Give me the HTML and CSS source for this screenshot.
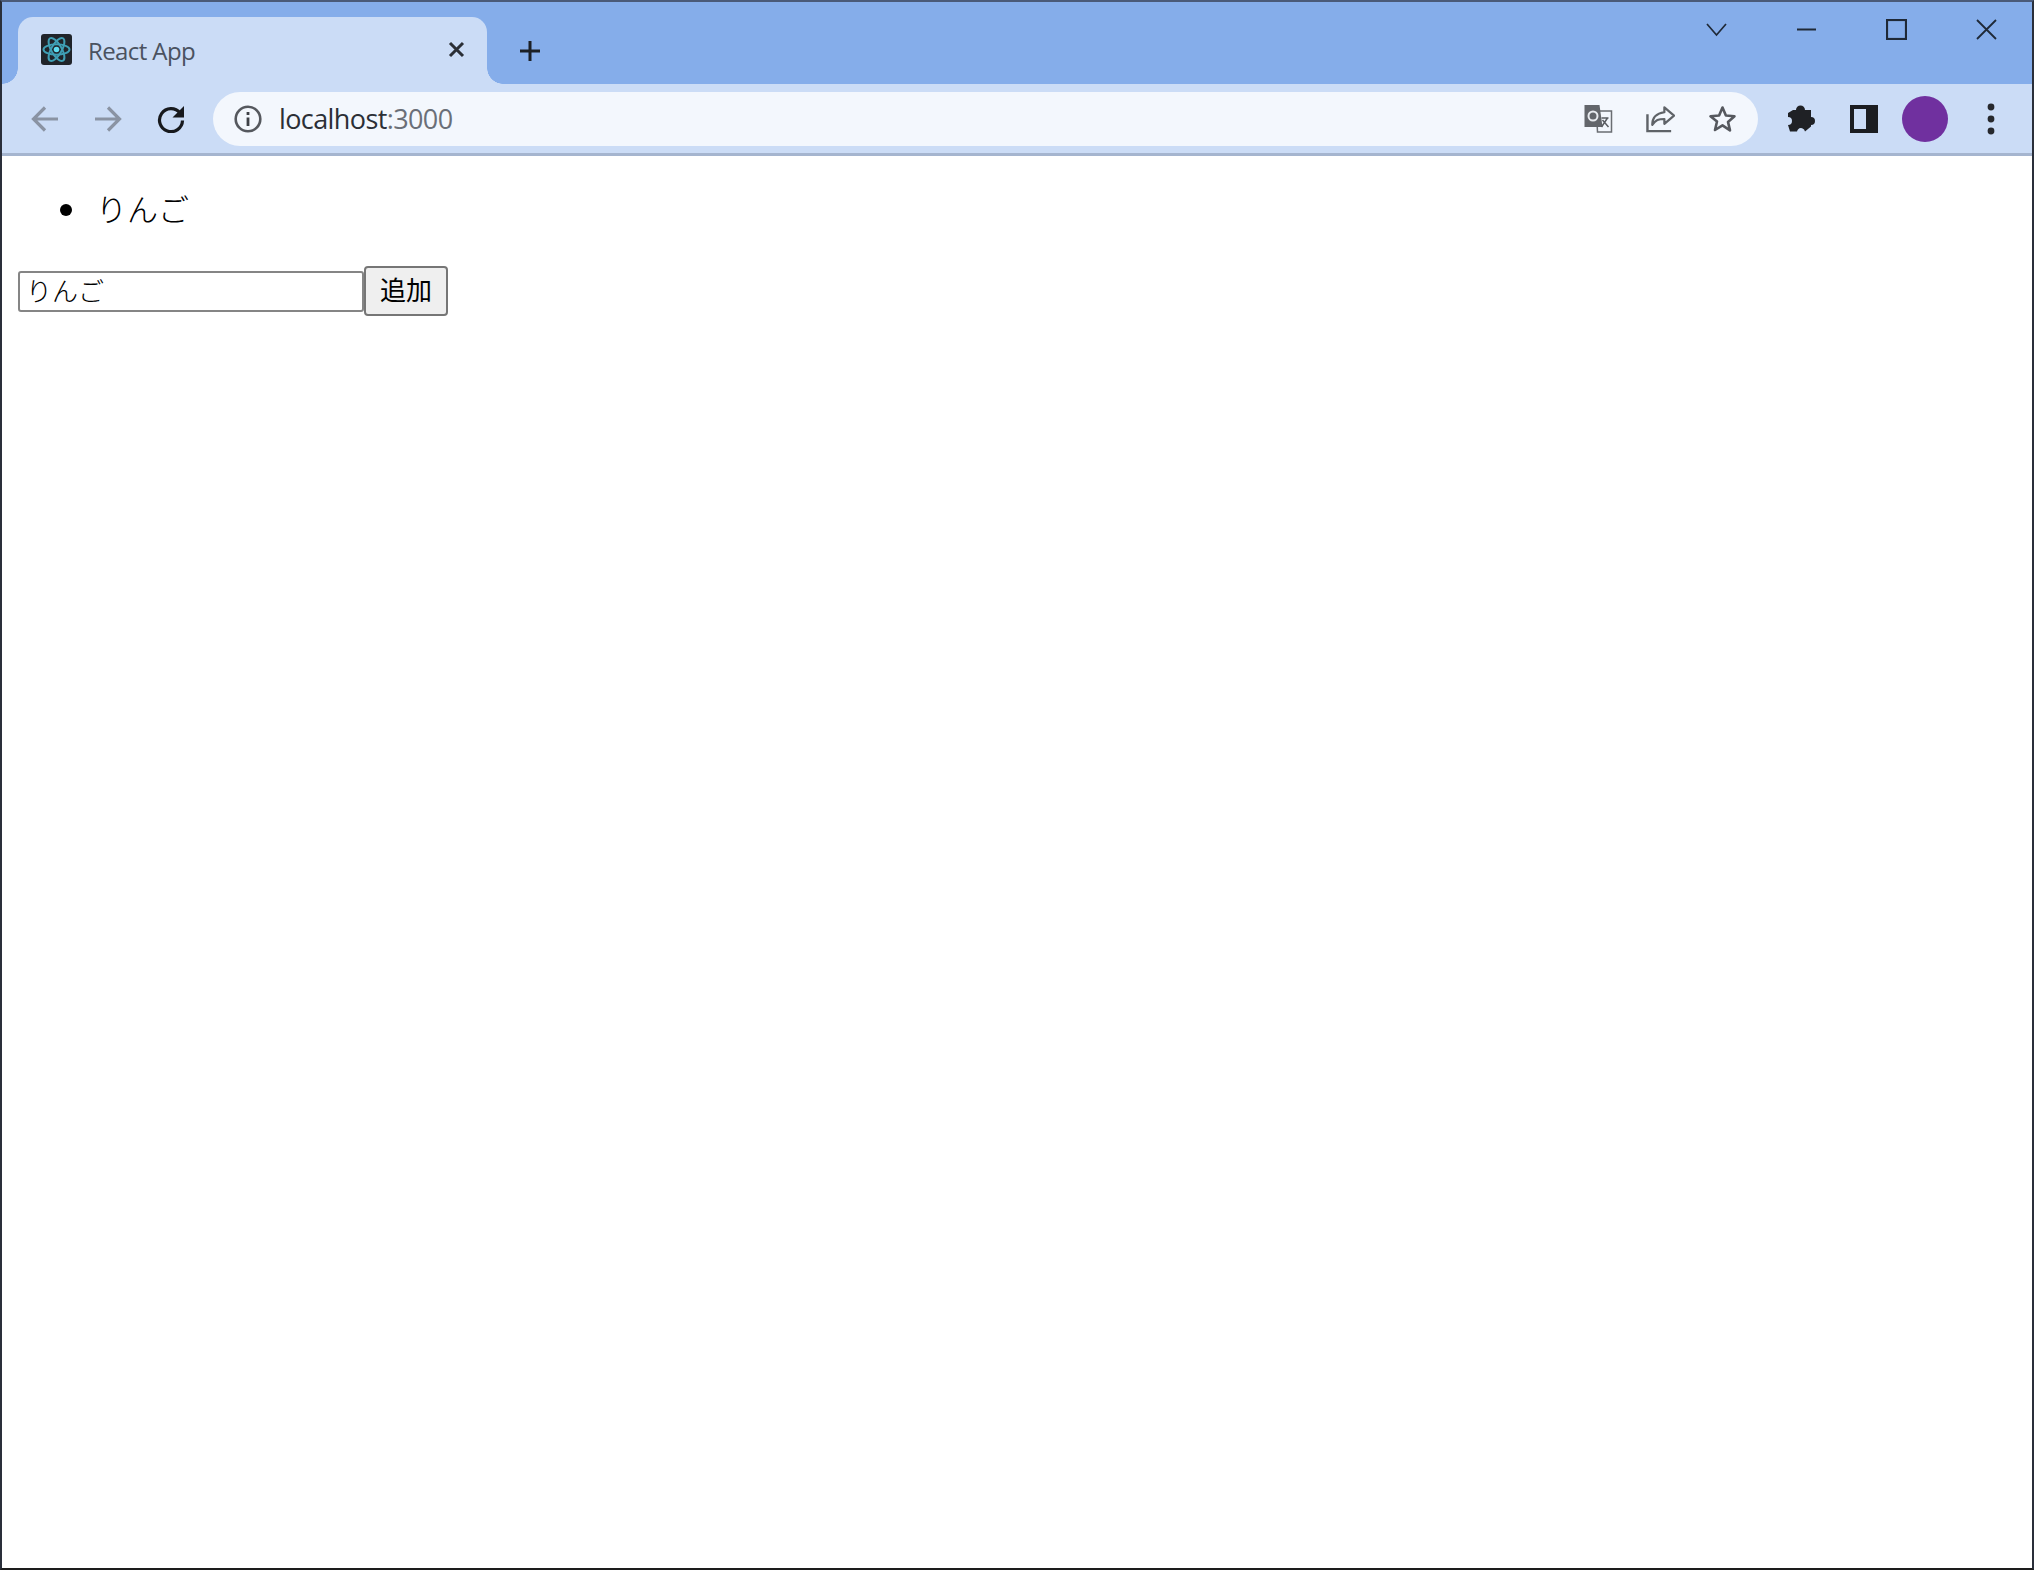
FILE: index.html
```
<!DOCTYPE html>
<html lang="ja">
<head>
<meta charset="utf-8">
<title>React App</title>
<link rel="stylesheet" href="styles.css">
</head>
<body>
<div class="window">
  <header class="tabstrip">
    <div class="tab">
      <svg class="favicon" viewBox="0 0 31 31">
        <rect width="31" height="31" rx="3" fill="#20242a"/>
        <g fill="none" stroke="#3f9fb5" stroke-width="2">
          <ellipse cx="15.500" cy="15.500" rx="13" ry="5.200"/>
          <ellipse cx="15.500" cy="15.500" rx="13" ry="5.200" transform="rotate(60 15.500 15.500)"/>
          <ellipse cx="15.500" cy="15.500" rx="13" ry="5.200" transform="rotate(120 15.500 15.500)"/>
        </g>
        <circle cx="15.500" cy="15.500" r="2.800" fill="#5fdcf0"/>
      </svg>
      <span class="tab-title">React App</span>
      <svg class="tab-close" viewBox="0 0 17 17"><path d="M2 2l13 13M15 2L2 15" stroke="#2b2f36" stroke-width="3" fill="none"/></svg>
    </div>
    <svg class="new-tab" viewBox="0 0 24 24"><path d="M12 2v20M2 12h20" stroke="#1c2026" stroke-width="3" fill="none"/></svg>
    <div class="window-controls">
      <svg class="win-icon" viewBox="0 0 21 21"><path d="M1 5l9.500 11L20 5" stroke="#1f2937" stroke-width="1.700" fill="none"/></svg>
      <svg class="win-icon" viewBox="0 0 21 21"><path d="M1 10.500h19" stroke="#1f2937" stroke-width="2" fill="none"/></svg>
      <svg class="win-icon" viewBox="0 0 21 21"><rect x="1" y="1" width="19" height="19" stroke="#1f2937" stroke-width="2.200" fill="none"/></svg>
      <svg class="win-icon" viewBox="0 0 21 21"><path d="M1 1l19 19M20 1L1 20" stroke="#1f2937" stroke-width="1.800" fill="none"/></svg>
    </div>
  </header>

  <nav class="toolbar">
    <svg class="tool-icon" viewBox="0 0 28 28"><path d="M27 14H3M14 2.500L2.500 14 14 25.500" stroke="#8a93a3" stroke-width="3.200" fill="none"/></svg>
    <svg class="tool-icon" viewBox="0 0 28 28"><path d="M1 14h24M14 2.500L25.500 14 14 25.500" stroke="#8a93a3" stroke-width="3.200" fill="none"/></svg>
    <svg class="tool-icon" viewBox="0 0 28 28"><path d="M23 8A11.500 11.500 0 1 0 25.500 15.500" stroke="#17191d" stroke-width="3.200" fill="none"/><path d="M27 1v11.500H15.500z" fill="#17191d"/></svg>
    <div class="omnibox">
      <svg class="site-info" viewBox="0 0 28 28"><circle cx="14" cy="14" r="12.300" stroke="#55585e" stroke-width="2.600" fill="none"/><path d="M12.600 12.500h2.800v8.500h-2.800zM12.600 7h2.800v2.900h-2.800z" fill="#3d4046"/></svg>
      <span class="url">localhost<span class="url-port">:3000</span></span>
      <div class="omni-actions">
        <svg class="omni-icon" viewBox="0 0 28 28">
          <path d="M12 6h15v21H13z" fill="#f3f7fd" stroke="#6a6d72" stroke-width="1.500"/>
          <path d="M0 0h15l3 22H0z" fill="#63666b"/>
          <circle cx="8.500" cy="11" r="4.500" fill="none" stroke="#e8ebef" stroke-width="2"/>
          <path d="M17 13h7M23 13l-6 9M18 15l6 7" stroke="#5a5d62" stroke-width="1.500" fill="none"/>
        </svg>
        <svg class="omni-icon" viewBox="0 0 30 28"><path d="M1.500 9v17.500H26" stroke="#5f6368" stroke-width="2.500" fill="none"/><path d="M19 2l10 8.500-10 8.500v-5c-6 0-9 1-12.500 6 0-7 4-12 12.500-13z" stroke="#5f6368" stroke-width="2.300" fill="none" stroke-linejoin="round"/></svg>
        <svg class="omni-icon" viewBox="0 0 28 28"><path d="M14 2.500l3.400 8 8.600.7-6.500 5.700 2 8.500L14 20.400 6.500 25l2-8.500L2 11.200l8.600-.7z" stroke="#55585e" stroke-width="2.600" fill="none" stroke-linejoin="round"/></svg>
      </div>
    </div>
    <svg class="puzzle" viewBox="0 0 29 28"><path d="M10 5a4.500 4.500 0 0 1 9 0h6v7a4 4 0 0 1 0 8v1.500l-6 5a4 4 0 0 0-7-2 4 4 0 0 0-1 2H4l-2-6.500a4 4 0 0 0 0-8V8l5-3z" fill="#1f2125"/></svg>
    <svg class="sidebar" viewBox="0 0 28 28"><path d="M0 0h28v28H0zM4 4v20h12V4z" fill="#1b1d21" fill-rule="evenodd"/></svg>
    <div class="avatar"></div>
    <svg class="kebab" viewBox="0 0 8 32"><circle cx="4" cy="4" r="3.400" fill="#26282d"/><circle cx="4" cy="16" r="3.400" fill="#26282d"/><circle cx="4" cy="28" r="3.400" fill="#26282d"/></svg>
  </nav>

  <main class="content">
    <ul class="items">
      <li class="item">りんご</li>
    </ul>
    <form class="add-form">
      <input class="add-input" type="text" value="りんご">
      <button class="add-button" type="button">追加</button>
    </form>
  </main>
</div>
</body>
</html>
```

FILE: styles.css
```
* {
  box-sizing: border-box;
}

html,
body {
  margin: 0;
  height: 100%;
  overflow: hidden;
}

svg {
  display: block;
  flex: none;
}

.window {
  display: flex;
  flex-direction: column;
  height: 1570px;
  background: #ffffff;
  border: 2px solid #2a2f3a;
  border-top-color: #4a5a78;
  border-bottom-color: #1d1d1d;
}

.tabstrip {
  display: flex;
  align-items: flex-start;
  height: 82px;
  padding: 15px 0 0 16px;
  background: #85adea;
}

.tab {
  position: relative;
  display: flex;
  align-items: center;
  width: 469px;
  height: 67px;
  padding: 0 22px 0 23px;
  background: #cbdcf6;
  border-radius: 15px 15px 0 0;
}

.tab::before,
.tab::after {
  content: "";
  position: absolute;
  bottom: 0;
  width: 16px;
  height: 16px;
}

.tab::before {
  left: -16px;
  background: radial-gradient(circle at 0 0, transparent 15.500px, #cbdcf6 16px);
}

.tab::after {
  right: -16px;
  background: radial-gradient(circle at 100% 0, transparent 15.500px, #cbdcf6 16px);
}

.favicon {
  width: 31px;
  height: 31px;
  margin-bottom: 3px;
}

.tab-title {
  flex: 1;
  margin-left: 16px;
  font: 24px/1 "Open Sans", sans-serif;
  letter-spacing: -0.6px;
  color: #4a5260;
}

.tab-close {
  width: 17px;
  height: 17px;
  margin-bottom: 3px;
}

.new-tab {
  width: 24px;
  height: 24px;
  margin: 22px 0 0 31px;
}

.window-controls {
  display: flex;
  gap: 69px;
  margin: 2px 0 0 auto;
  padding-right: 35px;
}

.win-icon {
  width: 21px;
  height: 21px;
}

.toolbar {
  display: flex;
  align-items: center;
  height: 69px;
  padding: 0 0 0 29px;
  background: #cbdcf6;
}

.tool-icon {
  width: 28px;
  height: 28px;
  margin-right: 35px;
}

.omnibox {
  display: flex;
  align-items: center;
  width: 1545px;
  height: 54px;
  margin-left: -7px;
  padding: 0 21px 0 21px;
  background: #f3f7fd;
  border-radius: 27px;
}

.site-info {
  width: 28px;
  height: 28px;
}

.url {
  margin-left: 17px;
  font: 27px/1 "Open Sans", sans-serif;
  letter-spacing: -0.6px;
  color: #2b2f36;
}

.url-port {
  color: #6a6f78;
}

.omni-actions {
  display: flex;
  align-items: center;
  gap: 33px;
  margin-left: auto;
}

.omni-icon {
  width: 29px;
  height: 28px;
}

.puzzle {
  width: 29px;
  height: 28px;
  margin-left: 28px;
}

.sidebar {
  width: 28px;
  height: 28px;
  margin-left: 35px;
}

.avatar {
  width: 46px;
  height: 46px;
  margin-left: 24px;
  border-radius: 50%;
  background: #70309f;
}

.kebab {
  width: 8px;
  height: 32px;
  margin-left: 39px;
}

.content {
  flex: 1;
  border-top: 3px solid #a5b5cf;
  padding: 0 0 0 16px;
  font-family: "Noto Sans CJK JP", sans-serif;
  color: #000000;
}

.items {
  margin: 29px 0 0;
  padding: 0 0 0 42px;
  list-style: none;
  font-size: 31px;
  font-weight: 300;
  line-height: 46px;
}

.item {
  display: flex;
  align-items: center;
  gap: 24px;
}

.item::before {
  content: "";
  width: 12px;
  height: 12px;
  margin-top: 4px;
  border-radius: 50%;
  background: #000000;
}

.add-form {
  display: flex;
  align-items: center;
  margin-top: 35px;
}

.add-input {
  width: 346px;
  height: 41px;
  padding: 0 6px 4px;
  font: 300 26px/1 "Noto Sans CJK JP", sans-serif;
  color: #000000;
  background: #ffffff;
  border: 2px solid #858585;
  border-radius: 3px;
}

.add-button {
  width: 84px;
  height: 50px;
  padding: 0 0 4px;
  font: 26px/1 "Noto Sans CJK JP", sans-serif;
  color: #000000;
  background: #efefef;
  border: 2px solid #767676;
  border-radius: 4px;
}
```
